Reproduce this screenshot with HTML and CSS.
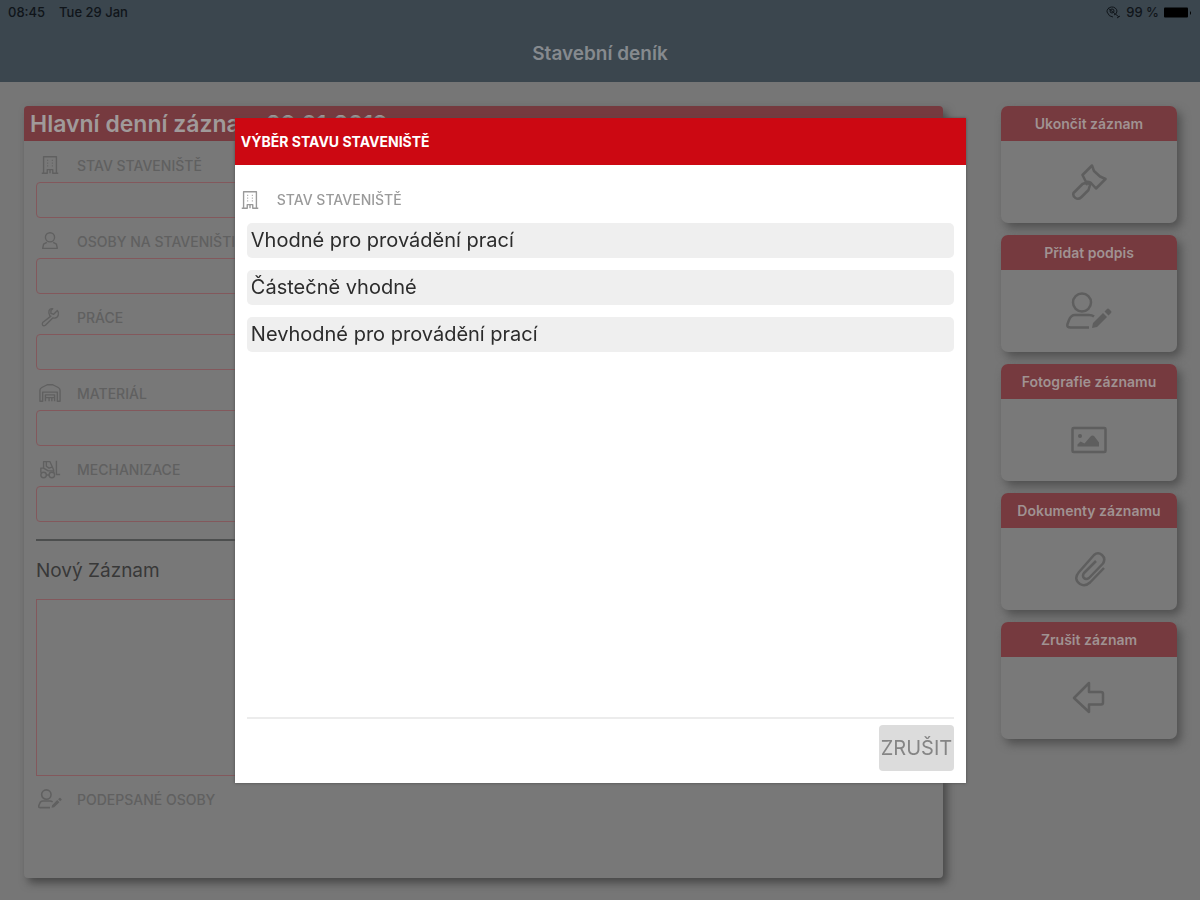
FILE: index.html
```html
<!DOCTYPE html>
<html lang="cs">
<head>
<meta charset="utf-8">
<meta name="viewport" content="width=device-width, initial-scale=1">
<title>Stavební deník</title>
<link rel="stylesheet" href="styles.css">
</head>
<body>
<svg class="defs" aria-hidden="true">
  <symbol id="i-building" viewBox="0 0 24 24"><path d="M5 21V3h14v18M3 21h6v-4h6v4h6M9 7h1M14 7h1M9 10h1M14 10h1M9 13h1M14 13h1M12 17v4"/></symbol>
  <symbol id="i-person" viewBox="0 0 24 24"><circle cx="12" cy="8" r="5"/><path d="M8.500 13.500 5 15.500 4 20h16l-1-4.500-3.500-2"/></symbol>
  <symbol id="i-wrench" viewBox="0 0 24 24"><path d="M13 11 4 18q-1 2 0 3t3 0l8-8q5 1 6-3 1-3-1-5l-4 4-3-1 0-3 2-2q-3-.500-4 2-1 3 1 6zM5.500 19.500h.1"/></symbol>
  <symbol id="i-warehouse" viewBox="0 0 24 24"><path d="M3 21H1V9q0-2 2-3l6-3h6l6 3q2 1 2 3v12h-3V11H4v10zM7 21v-7h10v7M7 17h10M11 17v4M14 17v4"/></symbol>
  <symbol id="i-forklift" viewBox="0 0 24 24"><circle cx="5" cy="18.500" r="3"/><circle cx="14" cy="18.500" r="3"/><path d="M8 18.500h3M2 16v-5h3V4h7l4 9v3M5 11l5 3h6M8 4v5l3 2 3-1M19 3v15h4"/></symbol>
  <symbol id="i-sign" viewBox="0 0 46 38"><circle cx="16" cy="10.500" r="9"/><path d="M28 24.500Q26 23 23 23H9q-4 0-6 5l-1.500 4q-1 3.500 3 3.500H23"/><path class="solid" d="M27 31 37 21l4 4-10 10-5 1zM38.500 19.500 41 17q1-1 2 0l2 2q1 1 0 2l-2.500 2.500z"/></symbol>
  <symbol id="i-gavel" viewBox="0 0 38 38"><path d="M22 2.500 12.500 12l3.500 7q3-1 5 1l5 5.500 9.500-9.500L30 13.500 24 8zM18 19l2 3-1.500 5-7 7q-3 3-6 1t-2-5l9-9zM16 22l2-3"/></symbol>
  <symbol id="i-photo" viewBox="0 0 38 30"><rect x="2.500" y="3" width="33" height="24" rx="1"/><circle class="solid" cx="10" cy="11" r="2"/><path class="solid" d="M7.500 21.500v-2l3-3 4 2 6-7q2-2 4 0l4.500 6v4z"/></symbol>
  <symbol id="i-clip" viewBox="0 0 38 38"><path d="m34 18-14 14.500q-5 4.500-10 1.500-7-5-1-12L24 5q4-3.500 8 0t1 8.500L19 28q-3 2-5 0t0-5L26 11"/></symbol>
  <symbol id="i-back" viewBox="0 0 38 38"><path d="M19 4 4 19l15 14v-7.500h12q2 0 2-2v-8.500q0-2-2-2H19z"/></symbol>
</svg>

<div class="page">
  <header class="top">
    <div class="status">
      <span class="status-left"><span>08:45</span><span>Tue 29 Jan</span></span>
      <span class="status-right">
        <svg class="orbit" viewBox="0 0 16 14" aria-hidden="true"><circle cx="7" cy="6" r="2"/><path d="M2 7a5 4.500 0 0 1 10-1M3 3l11 9M12 6q0 3-3 4M2 7q2 5 6 5M12 13l3-2"/></svg>
        <span>99 %</span>
        <svg class="battery" viewBox="0 0 28 11" aria-hidden="true"><rect width="24" height="10" y=".5" rx="1"/><path d="M26 4q2 2 0 4z"/></svg>
      </span>
    </div>
    <h1>Stavební deník</h1>
  </header>

  <main class="content">
    <section class="record">
      <h2 class="record-title">Hlavní denní záznam 29.01.2019</h2>
      <form class="record-form">
        <label class="caption" for="f1"><svg><use href="#i-building"/></svg>STAV STAVENIŠTĚ</label>
        <input class="field" id="f1" type="text">
        <label class="caption" for="f2"><svg><use href="#i-person"/></svg>OSOBY NA STAVENIŠTI</label>
        <input class="field" id="f2" type="text">
        <label class="caption" for="f3"><svg><use href="#i-wrench"/></svg>PRÁCE</label>
        <input class="field" id="f3" type="text">
        <label class="caption" for="f4"><svg><use href="#i-warehouse"/></svg>MATERIÁL</label>
        <input class="field" id="f4" type="text">
        <label class="caption" for="f5"><svg><use href="#i-forklift"/></svg>MECHANIZACE</label>
        <input class="field" id="f5" type="text">
        <hr class="rule">
        <label class="note-label" for="note">Nový Záznam</label>
        <textarea class="field note" id="note"></textarea>
        <p class="caption signed"><svg viewBox="0 0 46 38"><use href="#i-sign"/></svg>PODEPSANÉ OSOBY</p>
      </form>
    </section>

    <nav class="actions" aria-label="Akce záznamu">
      <button class="action" type="button"><span class="action-title">Ukončit záznam</span><span class="action-body"><svg><use href="#i-gavel"/></svg></span></button>
      <button class="action" type="button"><span class="action-title">Přidat podpis</span><span class="action-body"><svg class="wide"><use href="#i-sign"/></svg></span></button>
      <button class="action" type="button"><span class="action-title">Fotografie záznamu</span><span class="action-body"><svg><use href="#i-photo"/></svg></span></button>
      <button class="action" type="button"><span class="action-title">Dokumenty záznamu</span><span class="action-body"><svg><use href="#i-clip"/></svg></span></button>
      <button class="action" type="button"><span class="action-title">Zrušit záznam</span><span class="action-body"><svg><use href="#i-back"/></svg></span></button>
    </nav>
  </main>
</div>

<div class="overlay">
  <section class="modal" role="dialog" aria-modal="true" aria-labelledby="modal-title">
    <h2 class="modal-title" id="modal-title">VÝBĚR STAVU STAVENIŠTĚ</h2>
    <h3 class="modal-caption"><svg><use href="#i-building"/></svg>STAV STAVENIŠTĚ</h3>
    <div class="options">
      <button class="option" type="button">Vhodné pro provádění prací</button>
      <button class="option" type="button">Částečně vhodné</button>
      <button class="option" type="button">Nevhodné pro provádění prací</button>
    </div>
    <footer class="modal-footer"><button class="cancel" type="button">ZRUŠIT</button></footer>
  </section>
</div>
</body>
</html>
```
FILE: styles.css
```css
* { box-sizing: border-box; }
body {
  margin: 0;
  background: #767676;
  font-family: Inter, "Liberation Sans", sans-serif;
}
h1, h2, h3, p { margin: 0; }
button { border: 0; padding: 0; font-family: inherit; cursor: pointer; }
svg { fill: none; stroke: currentColor; stroke-width: 2; stroke-linejoin: round; }
.defs { display: none; }
.solid { fill: currentColor; stroke: none; }

.page { display: flex; flex-direction: column; min-height: 100vh; }

.top { height: 82px; background: #3b464e; }
.status {
  display: flex;
  justify-content: space-between;
  height: 24px;
  padding: 0 8px;
  align-items: center;
  color: #10151a;
  font-size: 13px;
  font-weight: 500;
}
.status-left { display: flex; gap: 14px; }
.status-right { display: flex; align-items: center; gap: 5px; }
.orbit { width: 16px; height: 14px; stroke-width: 1; }
.battery { width: 28px; height: 11px; fill: #000; stroke: none; }
.top h1 {
  color: #868a8e;
  font-size: 19px;
  font-weight: 600;
  line-height: 24px;
  padding-top: 18px;
  text-align: center;
}

.content { display: flex; flex: 1; gap: 58px; padding: 24px 23px 22px 24px; }
.record {
  display: flex;
  flex-direction: column;
  flex: 1;
  background: #787878;
  border-radius: 4px;
  box-shadow: 4px 5px 9px #484848;
}
.record-title {
  height: 35px;
  padding: 0 6px;
  border-radius: 4px 4px 0 0;
  background: #763a3f;
  color: #a09a9a;
  font-size: 23px;
  font-weight: 600;
  line-height: 36px;
}
.record-form { display: flex; flex-direction: column; padding: 1px 12px 0; }
.caption {
  display: flex;
  align-items: center;
  gap: 15px;
  height: 40px;
  padding: 6px 0 0 2px;
  color: #606060;
  font-size: 14px;
  font-weight: 500;
}
.caption svg { width: 24px; height: 22px; stroke-width: 1.5; }
.field {
  height: 36px;
  border: 1px solid #83585c;
  border-radius: 4px;
  background: transparent;
}
.rule { width: 100%; height: 2px; margin: 17px 0 0; border: 0; background: #4c4e4e; }
.note-label { padding: 17px 0 15px; color: #383838; font-size: 19px; line-height: 26px; }
.note { height: 177px; border-radius: 0; resize: none; }
.record-form .caption.signed svg { stroke-width: 3; }

.actions { display: flex; flex-direction: column; gap: 12px; width: 176px; }
.action {
  display: flex;
  flex-direction: column;
  height: 117px;
  border-radius: 7px;
  overflow: hidden;
  background: #797979;
  color: #5e5e5e;
  box-shadow: 4px 5px 10px #505050;
}
.action-title {
  width: 100%;
  background: #763a3f;
  color: #a09292;
  font-size: 14px;
  font-weight: 600;
  line-height: 35px;
}
.action-body { display: grid; flex: 1; width: 100%; place-items: center; }
.action-body svg { width: 38px; height: 38px; stroke-width: 2.5; }
.action-body .wide { width: 46px; }

.overlay { position: fixed; inset: 0; display: grid; place-items: center; padding: 1px 0 0 1px; }
.modal {
  display: flex;
  flex-direction: column;
  width: 61%;
  height: 74%;
  background: #fff;
  box-shadow: 0 0 3px #4c4c4c;
}
.modal-title {
  padding: 0 6px;
  background: #cc0812;
  color: #fff;
  font-size: 14px;
  font-weight: 700;
  line-height: 47px;
}
.modal-caption {
  display: flex;
  align-items: center;
  gap: 15px;
  padding: 24px 3px 12px;
  color: #9a9a9a;
  font-size: 14px;
  font-weight: 500;
}
.modal-caption svg { width: 24px; height: 22px; stroke-width: 1.5; }
.options { display: flex; flex: 1; flex-direction: column; gap: 12px; padding: 0 12px; }
.option {
  padding: 0 4px;
  border-radius: 5px;
  background: #efefef;
  color: #2c2c2c;
  font-size: 20px;
  line-height: 35px;
  text-align: left;
}
.modal-footer {
  display: flex;
  justify-content: flex-end;
  margin: 0 12px;
  padding: 6px 0 12px;
  border-top: 2px solid #ececec;
}
.cancel {
  padding: 0 2px;
  border-radius: 4px;
  background: #dcdcdc;
  color: #858585;
  font-size: 20px;
  line-height: 46px;
}
```
